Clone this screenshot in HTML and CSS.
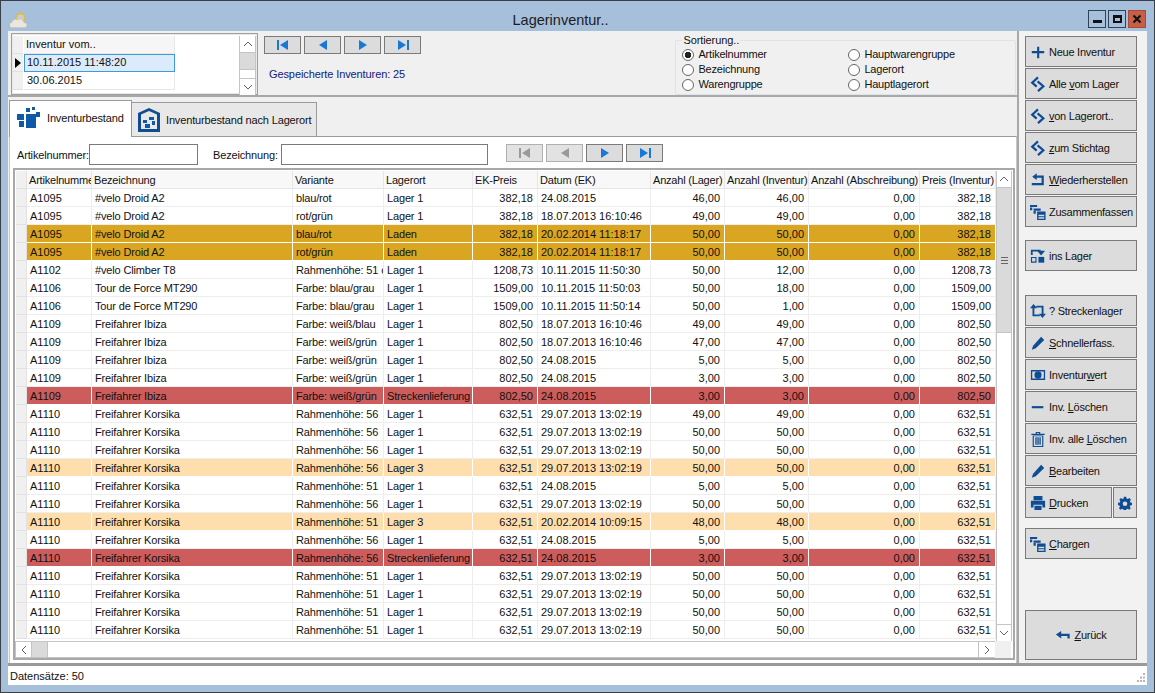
FILE: index.html
```html
<!DOCTYPE html>
<html lang="de">
<head>
<meta charset="utf-8">
<title>Lagerinventur..</title>
<link rel="stylesheet" href="styles.css">
</head>
<body>
<svg class="defs" xmlns="http://www.w3.org/2000/svg">
  <symbol id="i-first" viewBox="0 0 14 12"><rect x="1" y="1" width="2" height="10"/><path d="M12 1v10L4 6z"/></symbol>
  <symbol id="i-prev" viewBox="0 0 14 12"><path d="M11 1v10L3 6z"/></symbol>
  <symbol id="i-next" viewBox="0 0 14 12"><path d="M3 1v10l8-5z"/></symbol>
  <symbol id="i-last" viewBox="0 0 14 12"><rect x="11" y="1" width="2" height="10"/><path d="M2 1v10l8-5z"/></symbol>
  <symbol id="i-plus" viewBox="0 0 18 18"><path d="M8 3h2.400v5H16v2.400h-5.600V16H8v-5.600H2V8h6z"/></symbol>
  <symbol id="i-sync" viewBox="0 0 18 18"><path d="M9 1.500L2.500 7.500l5 4.500" fill="none" stroke="currentColor" stroke-width="2.500"/><path d="M8.500 6l6.500 5.500-6 5.500" fill="none" stroke="currentColor" stroke-width="2.500"/></symbol>
  <symbol id="i-undo" viewBox="0 0 18 18"><path d="M7.500 1.500v2.500H15.500v11H2v-2.500h11V6.500H7.500V9L2.500 5.300z"/></symbol>
  <symbol id="i-stack" viewBox="0 0 18 18"><path d="M0 1h8v2.500H0zM0 4h2.500v3H0zM4 5h8v2.500H4zM4 8h2.500v3H4z"/><path d="M8 8.500h9.500V18H8zM9.500 12v1.700h6.500V12zM9.500 15v1.500h6.500V15z" fill-rule="evenodd"/></symbol>
  <symbol id="i-store" viewBox="0 0 18 18"><path d="M1 2h11v2H3v4H1z"/><path d="M8 3h9l-4.500 5.500z"/><path d="M9.500 10h6.500v6.500H9.500z"/><path d="M1.700 10.700h5v5.200h-5z" fill="none" stroke="currentColor" stroke-width="1.300"/></symbol>
  <symbol id="i-loop" viewBox="0 0 18 18"><path d="M4 1L0 6h2.800v9H11v-2H4.900V6H8z"/><path d="M14 17l4-5h-2.800V3H7v2h6.100v7H10z"/></symbol>
  <symbol id="i-pen" viewBox="0 0 18 18"><path d="M12.500 2L16 5.500 6.500 15 2 16.500l1.500-4.500z"/></symbol>
  <symbol id="i-money" viewBox="0 0 18 18"><path d="M1 3.500h16v11H1zM2.500 5v8h13V5z" fill-rule="evenodd"/><ellipse cx="9" cy="9" rx="4" ry="4.200"/></symbol>
  <symbol id="i-minus" viewBox="0 0 18 18"><rect x="2" y="8" width="13" height="2.400"/></symbol>
  <symbol id="i-trash" viewBox="0 0 18 18"><path d="M1.500 3h15v1.500h-15zM6.500 1h5v2h-1.300V2.200H7.800V3H6.500zM3 5h12v13H3zM4.300 6v10.800h9.400V6z" fill-rule="evenodd"/><path d="M6 7h1.500v8.500H6zM8.300 7h1.500v8.500H8.300zM10.600 7h1.500v8.500h-1.500z"/></symbol>
  <symbol id="i-print" viewBox="0 0 18 18"><path d="M4 1h10v5H4zM1 6.500h16V14h-3v-3H4v3H1zM5 12h8v5H5z"/></symbol>
  <symbol id="i-gear" viewBox="0 0 18 18"><path fill-rule="evenodd" d="M7.500 1h3l.5 2.300 1.600.7 2-1.300 2 2-1.300 2 .7 1.600L18 8.800v2.800l-2.200.5-.7 1.600 1.300 2-2 2-2-1.300-1.600.7-.5 2.100h-3l-.5-2.100-1.600-.7-2 1.300-2-2 1.300-2-.7-1.600L0 11.600V8.800l2.300-.5.700-1.600-1.300-2 2-2 2 1.300L7.300 3.300zM9 7a3 3 0 1 0 0 6 3 3 0 0 0 0-6z"/></symbol>
  <symbol id="i-back" viewBox="0 0 18 18"><path d="M1 8.500L7 4.500v3h9.500V13H14v-3H7v3z"/></symbol>
</svg>

<div class="window">
  <header class="titlebar">
    <svg class="appicon" viewBox="0 0 18 18" aria-hidden="true">
      <circle cx="10.500" cy="7" r="4.500" fill="#c8cdd0" stroke="#e4b51e" stroke-width="2" stroke-dasharray="1.500 1"/>
      <path d="M2 16.500a2.500 2.500 0 0 1 0-5 3.500 3.500 0 0 1 5.500-2.500 4 4 0 0 1 6.500 2.800 2.400 2.400 0 0 1 1 4.700z" fill="#ece7dc" stroke="#c9c3b4" stroke-width=".5"/>
    </svg>
    <div class="title">Lagerinventur..</div>
    <div class="controls">
      <div class="ctl"><span class="ctl-min"></span></div>
      <div class="ctl"><span class="ctl-max"></span></div>
      <div class="ctl ctl-close">
        <svg viewBox="0 0 10 10"><path d="M1.500 1.500l7 7M8.500 1.500l-7 7" stroke="#111" stroke-width="2.200"/></svg>
      </div>
    </div>
  </header>

  <div class="client">
    <div class="work">
      <main class="left">
        <section class="top">
          <div class="listbox">
            <div class="inv-grid">
              <div class="inv-row"><div class="ind"></div><div class="inv-cell inv-head">Inventur vom..</div></div>
              <div class="inv-row"><div class="ind"><span class="caret"></span></div><div class="inv-cell inv-sel">10.11.2015 11:48:20</div></div>
              <div class="inv-row"><div class="ind"></div><div class="inv-cell">30.06.2015</div></div>
            </div>
            <div class="vscroll small">
              <div class="sbtn"><svg viewBox="0 0 10 6"><path d="M1 5l4-4 4 4" fill="none" stroke="#606060"/></svg></div>
              <div class="sthumb small-thumb"></div>
              <div class="sspace"></div>
              <div class="sbtn"><svg viewBox="0 0 10 6"><path d="M1 1l4 4 4-4" fill="none" stroke="#606060"/></svg></div>
            </div>
          </div>
          <div class="navcol">
            <div class="nav">
              <div class="navbtn"><svg><use href="#i-first"/></svg></div>
              <div class="navbtn"><svg><use href="#i-prev"/></svg></div>
              <div class="navbtn"><svg><use href="#i-next"/></svg></div>
              <div class="navbtn"><svg><use href="#i-last"/></svg></div>
            </div>
            <div class="saved">Gespeicherte Inventuren: 25</div>
          </div>
          <fieldset class="sortbox">
            <legend>Sortierung..</legend>
            <div class="radios">
              <div class="radio"><span class="dot on"></span>Artikelnummer</div>
              <div class="radio"><span class="dot"></span>Hauptwarengruppe</div>
              <div class="radio"><span class="dot"></span>Bezeichnung</div>
              <div class="radio"><span class="dot"></span>Lagerort</div>
              <div class="radio"><span class="dot"></span>Warengruppe</div>
              <div class="radio"><span class="dot"></span>Hauptlagerort</div>
            </div>
          </fieldset>
        </section>

        <nav class="tabs">
          <div class="tab active">
            <svg class="tabicon" viewBox="0 0 24 22"><path fill="#0f5aa8" d="M9 1h4v4H9zM15 0h3v3h-3zM19 5h4v5h-4zM0 7h7v6H0zM9 7h10v14H9zM2 14h5v6H2z"/></svg>
            <span>Inventurbestand</span>
          </div>
          <div class="tab second">
            <svg class="tabicon" viewBox="0 0 24 24"><path fill="#0f4c94" d="M12 0l11 5v19H1V5zM12 3L4 6.500V21h16V6.500z" fill-rule="evenodd"/><path fill="#0f5aa8" d="M6 12h4v3H6zM8 16h5v4H8zM12 9h5v3h-5zM15 13h3v4h-3z"/></svg>
            <span>Inventurbestand nach Lagerort</span>
          </div>
        </nav>

        <section class="panel">
          <div class="filter">
            <label class="flabel l1">Artikelnummer:</label>
            <div class="finput f1"></div>
            <label class="flabel l2">Bezeichnung:</label>
            <div class="finput f2"></div>
            <div class="nav filternav">
              <div class="navbtn off"><svg><use href="#i-first"/></svg></div>
              <div class="navbtn off"><svg><use href="#i-prev"/></svg></div>
              <div class="navbtn"><svg><use href="#i-next"/></svg></div>
              <div class="navbtn"><svg><use href="#i-last"/></svg></div>
            </div>
          </div>

          <div class="gridframe">
            <div class="gridmain">
              <div class="gridbody">
                <table class="data">
                  <colgroup>
                    <col class="c0"><col class="c1"><col class="c2"><col class="c3"><col class="c4"><col class="c5"><col class="c6"><col class="c7"><col class="c8"><col class="c9"><col class="c10">
                  </colgroup>
                  <thead>
                    <tr><th class="ind-cell"></th><th>Artikelnummer</th><th>Bezeichnung</th><th>Variante</th><th>Lagerort</th><th>EK-Preis</th><th>Datum (EK)</th><th>Anzahl (Lager)</th><th>Anzahl (Inventur)</th><th>Anzahl (Abschreibung)</th><th>Preis (Inventur)</th></tr>
                  </thead>
                  <tbody>
                    <tr><td class="ind-cell"></td><td>A1095</td><td>#velo Droid A2</td><td>blau/rot</td><td>Lager 1</td><td class="n">382,18</td><td>24.08.2015</td><td class="n">46,00</td><td class="n">46,00</td><td class="n">0,00</td><td class="n">382,18</td></tr>
                    <tr><td class="ind-cell"></td><td>A1095</td><td>#velo Droid A2</td><td>rot/grün</td><td>Lager 1</td><td class="n">382,18</td><td>18.07.2013 16:10:46</td><td class="n">49,00</td><td class="n">49,00</td><td class="n">0,00</td><td class="n">382,18</td></tr>
                    <tr class="gold"><td class="ind-cell"></td><td>A1095</td><td>#velo Droid A2</td><td>blau/rot</td><td>Laden</td><td class="n">382,18</td><td>20.02.2014 11:18:17</td><td class="n">50,00</td><td class="n">50,00</td><td class="n">0,00</td><td class="n">382,18</td></tr>
                    <tr class="gold"><td class="ind-cell"></td><td>A1095</td><td>#velo Droid A2</td><td>rot/grün</td><td>Laden</td><td class="n">382,18</td><td>20.02.2014 11:18:17</td><td class="n">50,00</td><td class="n">50,00</td><td class="n">0,00</td><td class="n">382,18</td></tr>
                    <tr><td class="ind-cell"></td><td>A1102</td><td>#velo Climber T8</td><td>Rahmenhöhe: 51 cm</td><td>Lager 1</td><td class="n">1208,73</td><td>10.11.2015 11:50:30</td><td class="n">50,00</td><td class="n">12,00</td><td class="n">0,00</td><td class="n">1208,73</td></tr>
                    <tr><td class="ind-cell"></td><td>A1106</td><td>Tour de Force MT290</td><td>Farbe: blau/grau</td><td>Lager 1</td><td class="n">1509,00</td><td>10.11.2015 11:50:03</td><td class="n">50,00</td><td class="n">18,00</td><td class="n">0,00</td><td class="n">1509,00</td></tr>
                    <tr><td class="ind-cell"></td><td>A1106</td><td>Tour de Force MT290</td><td>Farbe: blau/grau</td><td>Lager 1</td><td class="n">1509,00</td><td>10.11.2015 11:50:14</td><td class="n">50,00</td><td class="n">1,00</td><td class="n">0,00</td><td class="n">1509,00</td></tr>
                    <tr><td class="ind-cell"></td><td>A1109</td><td>Freifahrer Ibiza</td><td>Farbe: weiß/blau</td><td>Lager 1</td><td class="n">802,50</td><td>18.07.2013 16:10:46</td><td class="n">49,00</td><td class="n">49,00</td><td class="n">0,00</td><td class="n">802,50</td></tr>
                    <tr><td class="ind-cell"></td><td>A1109</td><td>Freifahrer Ibiza</td><td>Farbe: weiß/grün</td><td>Lager 1</td><td class="n">802,50</td><td>18.07.2013 16:10:46</td><td class="n">47,00</td><td class="n">47,00</td><td class="n">0,00</td><td class="n">802,50</td></tr>
                    <tr><td class="ind-cell"></td><td>A1109</td><td>Freifahrer Ibiza</td><td>Farbe: weiß/grün</td><td>Lager 1</td><td class="n">802,50</td><td>24.08.2015</td><td class="n">5,00</td><td class="n">5,00</td><td class="n">0,00</td><td class="n">802,50</td></tr>
                    <tr><td class="ind-cell"></td><td>A1109</td><td>Freifahrer Ibiza</td><td>Farbe: weiß/grün</td><td>Lager 1</td><td class="n">802,50</td><td>24.08.2015</td><td class="n">3,00</td><td class="n">3,00</td><td class="n">0,00</td><td class="n">802,50</td></tr>
                    <tr class="red"><td class="ind-cell"></td><td>A1109</td><td>Freifahrer Ibiza</td><td>Farbe: weiß/grün</td><td>Streckenlieferung</td><td class="n">802,50</td><td>24.08.2015</td><td class="n">3,00</td><td class="n">3,00</td><td class="n">0,00</td><td class="n">802,50</td></tr>
                    <tr><td class="ind-cell"></td><td>A1110</td><td>Freifahrer Korsika</td><td>Rahmenhöhe: 56</td><td>Lager 1</td><td class="n">632,51</td><td>29.07.2013 13:02:19</td><td class="n">49,00</td><td class="n">49,00</td><td class="n">0,00</td><td class="n">632,51</td></tr>
                    <tr><td class="ind-cell"></td><td>A1110</td><td>Freifahrer Korsika</td><td>Rahmenhöhe: 56</td><td>Lager 1</td><td class="n">632,51</td><td>29.07.2013 13:02:19</td><td class="n">50,00</td><td class="n">50,00</td><td class="n">0,00</td><td class="n">632,51</td></tr>
                    <tr><td class="ind-cell"></td><td>A1110</td><td>Freifahrer Korsika</td><td>Rahmenhöhe: 56</td><td>Lager 1</td><td class="n">632,51</td><td>29.07.2013 13:02:19</td><td class="n">50,00</td><td class="n">50,00</td><td class="n">0,00</td><td class="n">632,51</td></tr>
                    <tr class="peach"><td class="ind-cell"></td><td>A1110</td><td>Freifahrer Korsika</td><td>Rahmenhöhe: 56</td><td>Lager 3</td><td class="n">632,51</td><td>29.07.2013 13:02:19</td><td class="n">50,00</td><td class="n">50,00</td><td class="n">0,00</td><td class="n">632,51</td></tr>
                    <tr><td class="ind-cell"></td><td>A1110</td><td>Freifahrer Korsika</td><td>Rahmenhöhe: 51</td><td>Lager 1</td><td class="n">632,51</td><td>24.08.2015</td><td class="n">5,00</td><td class="n">5,00</td><td class="n">0,00</td><td class="n">632,51</td></tr>
                    <tr><td class="ind-cell"></td><td>A1110</td><td>Freifahrer Korsika</td><td>Rahmenhöhe: 56</td><td>Lager 1</td><td class="n">632,51</td><td>29.07.2013 13:02:19</td><td class="n">50,00</td><td class="n">50,00</td><td class="n">0,00</td><td class="n">632,51</td></tr>
                    <tr class="peach"><td class="ind-cell"></td><td>A1110</td><td>Freifahrer Korsika</td><td>Rahmenhöhe: 51</td><td>Lager 3</td><td class="n">632,51</td><td>20.02.2014 10:09:15</td><td class="n">48,00</td><td class="n">48,00</td><td class="n">0,00</td><td class="n">632,51</td></tr>
                    <tr><td class="ind-cell"></td><td>A1110</td><td>Freifahrer Korsika</td><td>Rahmenhöhe: 56</td><td>Lager 1</td><td class="n">632,51</td><td>24.08.2015</td><td class="n">5,00</td><td class="n">5,00</td><td class="n">0,00</td><td class="n">632,51</td></tr>
                    <tr class="red"><td class="ind-cell"></td><td>A1110</td><td>Freifahrer Korsika</td><td>Rahmenhöhe: 56</td><td>Streckenlieferung</td><td class="n">632,51</td><td>24.08.2015</td><td class="n">3,00</td><td class="n">3,00</td><td class="n">0,00</td><td class="n">632,51</td></tr>
                    <tr><td class="ind-cell"></td><td>A1110</td><td>Freifahrer Korsika</td><td>Rahmenhöhe: 51</td><td>Lager 1</td><td class="n">632,51</td><td>29.07.2013 13:02:19</td><td class="n">50,00</td><td class="n">50,00</td><td class="n">0,00</td><td class="n">632,51</td></tr>
                    <tr><td class="ind-cell"></td><td>A1110</td><td>Freifahrer Korsika</td><td>Rahmenhöhe: 51</td><td>Lager 1</td><td class="n">632,51</td><td>29.07.2013 13:02:19</td><td class="n">50,00</td><td class="n">50,00</td><td class="n">0,00</td><td class="n">632,51</td></tr>
                    <tr><td class="ind-cell"></td><td>A1110</td><td>Freifahrer Korsika</td><td>Rahmenhöhe: 51</td><td>Lager 1</td><td class="n">632,51</td><td>29.07.2013 13:02:19</td><td class="n">50,00</td><td class="n">50,00</td><td class="n">0,00</td><td class="n">632,51</td></tr>
                    <tr><td class="ind-cell"></td><td>A1110</td><td>Freifahrer Korsika</td><td>Rahmenhöhe: 51</td><td>Lager 1</td><td class="n">632,51</td><td>29.07.2013 13:02:19</td><td class="n">50,00</td><td class="n">50,00</td><td class="n">0,00</td><td class="n">632,51</td></tr>
                  </tbody>
                </table>
              </div>
              <div class="vscroll">
                <div class="sbtn"><svg viewBox="0 0 10 6"><path d="M1 5l4-4 4 4" fill="none" stroke="#606060"/></svg></div>
                <div class="sthumb main-thumb"><span class="grip"></span></div>
                <div class="sspace"></div>
                <div class="sbtn"><svg viewBox="0 0 10 6"><path d="M1 1l4 4 4-4" fill="none" stroke="#606060"/></svg></div>
              </div>
            </div>
            <div class="hscrollrow">
              <div class="hscroll">
                <div class="hbtn"><svg viewBox="0 0 6 10"><path d="M5 1L1 5l4 4" fill="none" stroke="#606060"/></svg></div>
                <div class="hthumb"></div>
                <div class="sspace"></div>
                <div class="hbtn end"><svg viewBox="0 0 6 10"><path d="M1 1l4 4-4 4" fill="none" stroke="#606060"/></svg></div>
              </div>
              <div class="corner"></div>
            </div>
          </div>
        </section>
      </main>

      <aside class="side">
        <div class="btn"><svg class="ico"><use href="#i-plus"/></svg><span>Neue Inventur</span></div>
        <div class="btn"><svg class="ico"><use href="#i-sync"/></svg><span>Alle <u>v</u>om Lager</span></div>
        <div class="btn"><svg class="ico"><use href="#i-sync"/></svg><span><u>v</u>on Lagerort..</span></div>
        <div class="btn"><svg class="ico"><use href="#i-sync"/></svg><span><u>z</u>um Stichtag</span></div>
        <div class="btn"><svg class="ico"><use href="#i-undo"/></svg><span><u>W</u>iederherstellen</span></div>
        <div class="btn"><svg class="ico"><use href="#i-stack"/></svg><span>Zusammenfassen</span></div>
        <div class="btn gap-a"><svg class="ico"><use href="#i-store"/></svg><span>ins Lager</span></div>
        <div class="btn gap-b"><svg class="ico"><use href="#i-loop"/></svg><span>? Streckenlager</span></div>
        <div class="btn"><svg class="ico"><use href="#i-pen"/></svg><span><u>S</u>chnellerfass.</span></div>
        <div class="btn"><svg class="ico"><use href="#i-money"/></svg><span>Inventur<u>w</u>ert</span></div>
        <div class="btn"><svg class="ico"><use href="#i-minus"/></svg><span>Inv. <u>L</u>öschen</span></div>
        <div class="btn"><svg class="ico"><use href="#i-trash"/></svg><span>Inv. alle <u>L</u>öschen</span></div>
        <div class="btn"><svg class="ico"><use href="#i-pen"/></svg><span><u>B</u>earbeiten</span></div>
        <div class="btnrow">
          <div class="btn grow"><svg class="ico"><use href="#i-print"/></svg><span><u>D</u>rucken</span></div>
          <div class="btn gearbtn"><svg class="ico"><use href="#i-gear"/></svg></div>
        </div>
        <div class="btn gap-c"><svg class="ico"><use href="#i-stack"/></svg><span><u>C</u>hargen</span></div>
        <div class="btn backbtn"><svg class="ico"><use href="#i-back"/></svg><span><u>Z</u>urück</span></div>
      </aside>
    </div>
    <footer class="status">
      <span>Datensätze: 50</span>
      <svg class="gripper" viewBox="0 0 12 12"><path fill="#b5b5b5" d="M9 1h2v2H9zM6 4.500h2v2H6zM9 4.500h2v2H9zM3 8h2v2H3zM6 8h2v2H6zM9 8h2v2H9z"/></svg>
    </footer>
  </div>
</div>
</body>
</html>
```

FILE: styles.css
```css
* { box-sizing: border-box; }
html, body { margin: 0; padding: 0; }
body {
  width: 1155px;
  height: 693px;
  overflow: hidden;
  font-family: "Liberation Sans", Arial, sans-serif;
  font-size: 11px;
  color: #111;
}
.defs { display: none; }

.window {
  width: 1155px;
  height: 693px;
  display: flex;
  flex-direction: column;
  background: #a6bfdb;
  border: 1px solid #3a3f45;
  padding: 0 7px 7px;
}

.titlebar {
  height: 30px;
  flex: none;
  display: flex;
  align-items: flex-start;
}
.appicon { width: 18px; height: 18px; margin: 10px 5px 0 2px; flex: none; }
.title {
  flex: 1;
  text-align: center;
  font-size: 14.500px;
  line-height: 18px;
  padding-top: 10px;
  color: #1c1c1c;
}
.controls { display: flex; gap: 2px; margin: 9px 1px 0 0; }
.ctl {
  width: 18px;
  height: 18px;
  border: 1px solid #2f4357;
  display: flex;
  align-items: center;
  justify-content: center;
}
.ctl-min { width: 9px; height: 3px; background: #111; margin-top: 5px; }
.ctl-max { width: 9px; height: 8px; border: 2px solid #111; border-top-width: 3px; }
.ctl-close { background: #c75f48; border-color: #a84a38; }
.ctl-close svg { width: 10px; height: 10px; }

.client {
  flex: 1;
  min-height: 0;
  display: flex;
  flex-direction: column;
  background: #f0f0f0;
}
.work { height: 632px; flex: none; display: flex; }
.left { width: 1009px; flex: none; display: flex; flex-direction: column; }

.top {
  height: 66px;
  flex: none;
  display: flex;
  border-bottom: 2px solid #a8a8a8;
  padding: 2px 1px 0 3px;
}
.listbox {
  width: 247px;
  height: 62px;
  background: #fff;
  border: 1px solid #a0a0a0;
  box-shadow: inset 0 0 0 1px #e8e8e8;
  display: flex;
  padding: 2px 1px 0 1px;
}
.inv-grid { width: 226px; }
.inv-row { display: flex; height: 18px; }
.ind {
  width: 10px;
  margin-right: 1px;
  background: #f0f0f0;
  border-bottom: 1px solid #e0e0e0;
  display: flex;
  align-items: center;
  justify-content: center;
}
.caret {
  width: 0;
  height: 0;
  border-left: 6px solid #000;
  border-top: 5px solid transparent;
  border-bottom: 5px solid transparent;
}
.inv-cell {
  width: 151px;
  line-height: 17px;
  padding-left: 3px;
  border-bottom: 1px solid #e8e8e8;
  border-right: 1px solid #e8e8e8;
}
.inv-head { background: #f6f6f6; padding-left: 2px; }
.inv-sel { background: #dcebfc; border: 1px solid #3d9bd9; line-height: 15px; padding-left: 2px; }

.vscroll {
  width: 17px;
  flex: none;
  display: flex;
  flex-direction: column;
  background: #fff;
  border-left: 1px solid #c4c4c4;
  border-right: 1px solid #c4c4c4;
}
.vscroll.small { height: 59px; margin-left: auto; }
.sbtn {
  height: 17px;
  flex: none;
  background: #fff;
  border: 0 solid #c4c4c4;
  border-bottom-width: 1px;
  display: flex;
  align-items: center;
  justify-content: center;
}
.sbtn:last-child { border-top-width: 1px; border-bottom-width: 0; }
.sbtn svg { width: 10px; height: 6px; }
.sthumb {
  background: #dadada;
  border-bottom: 1px solid #c4c4c4;
  flex: none;
  display: flex;
  align-items: center;
  justify-content: center;
}
.small-thumb { height: 17px; }
.main-thumb { height: 145px; }
.grip { width: 7px; height: 7px; border-top: 1px solid #666; border-bottom: 1px solid #666; }
.grip::after { content: ""; display: block; height: 1px; margin-top: 2px; background: #666; }
.sspace { flex: 1; }

.navcol { width: 418px; padding: 3px 0 0 6px; }
.nav { display: flex; gap: 3px; }
.navbtn {
  width: 37px;
  height: 18px;
  background: #dcdcdc;
  border: 1px solid #7a7a7a;
  display: flex;
  align-items: center;
  justify-content: center;
  color: #1878d8;
}
.navbtn svg { width: 14px; height: 12px; fill: currentColor; }
.navbtn.off { color: #9a9a9a; background: #e2e2e2; border-color: #b0b0b0; }
.saved { margin: 13px 0 0 5px; line-height: 14px; color: #10207e; letter-spacing: -.1px; }

.sortbox {
  width: 341px;
  height: 61px;
  margin: 1px 0 0 0;
  padding: 0 0 0 6px;
  border: 1px solid #dce4ea;
  border-radius: 2px;
  min-inline-size: 0;
}
.sortbox legend { padding: 0 1px; line-height: 12px; letter-spacing: -.1px; }
.radios {
  display: grid;
  grid-template-columns: 166px 1fr;
  grid-auto-rows: 15px;
  margin-top: 1px;
}
.radio { display: flex; align-items: center; line-height: 15px; letter-spacing: -.2px; }
.dot {
  width: 12px;
  height: 12px;
  border-radius: 50%;
  border: 1px solid #666;
  background: #fff;
  margin-right: 4px;
  flex: none;
}
.dot.on { background: radial-gradient(circle, #222 0 3px, #fff 3.500px); }

.tabs {
  height: 39px;
  flex: none;
  display: flex;
  align-items: flex-end;
  padding-left: 1px;
}
.tab {
  height: 34px;
  display: flex;
  align-items: center;
  white-space: nowrap;
  letter-spacing: -.15px;
  background: #e8e8e8;
  border: 1px solid #9a9a9a;
  border-left: 0;
  border-bottom: 0;
}
.tab.second { width: 185px; padding-left: 5px; gap: 5px; }
.tab.active {
  width: 123px;
  height: 37px;
  background: #fff;
  border-left: 1px solid #9a9a9a;
  padding: 0 0 3px 7px;
  gap: 6px;
  margin-bottom: -1px;
  z-index: 1;
}
.tabicon { width: 24px; height: 24px; flex: none; }

.panel {
  flex: 1;
  margin-left: 1px;
  background: #fff;
  border-top: 1px solid #9a9a9a;
  border-left: 1px solid #c8c8c8;
  border-right: 1px solid #c8c8c8;
  min-height: 0;
  display: flex;
  flex-direction: column;
}
.filter { height: 31px; flex: none; display: flex; align-items: flex-start; padding: 7px 0 0 7px; }
.flabel { line-height: 23px; white-space: nowrap; letter-spacing: -.15px; }
.l1 { width: 72px; }
.l2 { width: 68px; margin-left: 15px; }
.finput { height: 21px; background: #fff; border: 1px solid #7a7a7a; }
.f1 { width: 109px; }
.f2 { width: 207px; }
.filternav { margin-left: 18px; }

.gridframe {
  width: 1002px;
  height: 492px;
  margin-left: 3px;
  border: 2px solid #a8a8a8;
  padding: 1px 2px 0 1px;
  display: flex;
  flex-direction: column;
}
.gridmain { flex: 1; min-height: 0; display: flex; }
.gridbody { width: 980px; flex: none; overflow: hidden; }
.gridmain > .vscroll { height: 100%; width: 16px; }

.data { width: 980px; table-layout: fixed; border-collapse: separate; border-spacing: 0; }
.c0 { width: 11px; } .c1 { width: 65px; } .c2 { width: 201px; } .c3 { width: 91px; }
.c4 { width: 89px; } .c5 { width: 65px; } .c6 { width: 113px; } .c7 { width: 74px; }
.c8 { width: 84px; } .c9 { width: 111px; } .c10 { width: 76px; }
.data th, .data td {
  height: 18px;
  padding: 1px 3px 0;
  overflow: hidden;
  white-space: nowrap;
  font-weight: 400;
  text-align: left;
  line-height: 16px;
  border-right: 1px solid #eeeeee;
  border-bottom: 1px solid #eeeeee;
}
.data th {
  background: #f8f8f8;
  padding: 1px 0 0 2px;
  letter-spacing: -.2px;
  border-right-color: #e6e6e6;
  border-bottom-color: #e6e6e6;
}
.data td:nth-child(3), .data td:nth-child(4), .data td:nth-child(5) { letter-spacing: -.15px; }
.data td.n { text-align: right; padding-right: 4px; }
.data .ind-cell { background: #f0f0f0; padding: 0; border-color: #e2e2e2; }
.gold td:not(.ind-cell) { background: #daa520; border-color: #fff; }
.red td:not(.ind-cell) { background: #cd5c5c; border-color: #fff; }
.peach td:not(.ind-cell) { background: #ffdead; border-color: #fff; }

.hscrollrow { height: 17px; flex: none; display: flex; margin-left: -1px; }
.hscroll {
  width: 981px;
  display: flex;
  background: #fff;
  border-top: 1px solid #c4c4c4;
  border-bottom: 1px solid #c4c4c4;
  border-left: 1px solid #c4c4c4;
}
.hbtn {
  width: 16px;
  flex: none;
  border-right: 1px solid #c4c4c4;
  display: flex;
  align-items: center;
  justify-content: center;
}
.hbtn.end { border-right: 0; border-left: 1px solid #c4c4c4; width: 17px; }
.hbtn svg { width: 6px; height: 10px; }
.hthumb { width: 16px; background: #dadada; border-right: 1px solid #c4c4c4; flex: none; }
.corner { width: 16px; background: #f0f0f0; }

.side {
  flex: 1;
  border-left: 2px solid #a8a8a8;
  padding: 5px 0 0 6px;
  display: flex;
  flex-direction: column;
  background: #f2f2f2;
}
.btn {
  width: 112px;
  height: 31px;
  flex: none;
  margin-bottom: 1px;
  background: #dcdcdc;
  border: 1px solid #7a7a7a;
  display: flex;
  align-items: center;
  padding-left: 4px;
  gap: 3px;
  color: #0e4c94;
  white-space: nowrap;
}
.btn span { color: #111; letter-spacing: -.25px; }
.ico { width: 16px; height: 16px; fill: currentColor; flex: none; }
.btnrow { display: flex; gap: 1px; }
.btn.grow { width: 87px; }
.btn.gearbtn { width: 24px; padding-left: 0; justify-content: center; }
.gearbtn .ico { width: 14px; height: 14px; }
.gap-a { margin-top: 12px; }
.gap-b { margin-top: 23px; }
.gap-c { margin-top: 9px; }
.btn.backbtn {
  height: 50px;
  margin-top: 50px;
  justify-content: center;
  padding-left: 0;
}

.status {
  flex: 1;
  min-height: 0;
  background: #fff;
  border-top: 3px solid #9a9a9a;
  display: flex;
  align-items: center;
  padding-left: 2px;
  position: relative;
}
.gripper { width: 12px; height: 12px; position: absolute; right: 1px; bottom: 1px; }
```
